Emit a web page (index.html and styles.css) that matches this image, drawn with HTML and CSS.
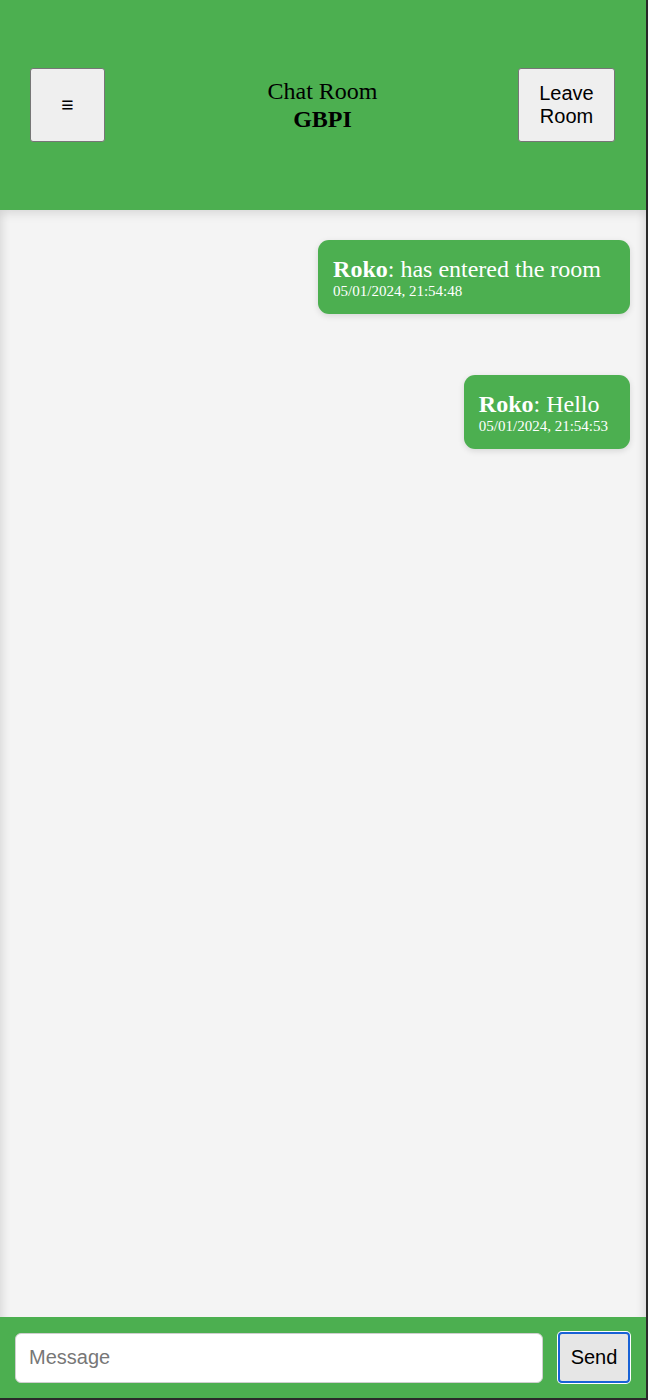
FILE: index.html
```html
<!DOCTYPE html>
<html>
<head>
<meta charset="utf-8">
<link rel="stylesheet" href="styles.css">
</head>
<body>
<div class="app">
  <header class="header">
    <button class="btn menu-btn">&#8801;</button>
    <div class="title">
      <div class="title-main">Chat Room</div>
      <div class="title-room">GBPI</div>
    </div>
    <button class="btn leave-btn">Leave<br>Room</button>
  </header>
  <main class="chat">
    <div class="bubble">
      <div class="msg"><b>Roko</b>: has entered the room</div>
      <div class="time">05/01/2024, 21:54:48</div>
    </div>
    <div class="bubble">
      <div class="msg"><b>Roko</b>: Hello</div>
      <div class="time">05/01/2024, 21:54:53</div>
    </div>
  </main>
  <footer class="footer">
    <input class="input" type="text" placeholder="Message">
    <button class="send">Send</button>
  </footer>
</div>
</body>
</html>
```
FILE: styles.css
```css
html, body {
  margin: 0;
  padding: 0;
  background: #fff;
}
.app {
  width: 646px;
  height: 1398px;
  border-right: 2px solid #2a2a2a;
  border-bottom: 2px solid #2a2a2a;
  display: flex;
  flex-direction: column;
  font-family: "Liberation Serif", serif;
  background: #f4f4f4;
}
.header {
  height: 210px;
  flex: none;
  background: #4caf50;
  display: grid;
  grid-template-columns: 1fr auto 1fr;
  align-items: center;
  padding: 0 31px 0 30px;
  box-sizing: border-box;
  box-shadow: 0 3px 10px rgba(0,0,0,0.12);
  position: relative;
  z-index: 1;
}
.btn {
  background: #efefef;
  border: 1px solid #767676;
  border-radius: 3px;
  font-family: "Liberation Sans", sans-serif;
  color: #000;
  height: 74px;
  padding: 0;
}
.menu-btn {
  width: 75px;
  font-size: 21px;
  font-weight: bold;
  justify-self: start;
}
.leave-btn {
  width: 97px;
  font-size: 20px;
  line-height: 23px;
  justify-self: end;
}
.title {
  text-align: center;
  font-size: 24px;
  line-height: 28px;
  color: #000;
}
.title-room {
  font-weight: bold;
}
.chat {
  flex: 1;
  display: flex;
  flex-direction: column;
  align-items: flex-end;
  gap: 61px;
  padding: 30px 16px 0 0;
  box-shadow: inset 10px 0 10px -8px rgba(0,0,0,0.12), inset -10px 0 10px -8px rgba(0,0,0,0.12);
}
.bubble {
  background: #4caf50;
  color: #fff;
  border-radius: 11px;
  padding: 16px 22px 14px 15px;
  box-shadow: 0 2px 6px rgba(0,0,0,0.12);
}
.msg {
  font-size: 24px;
  line-height: 27px;
  padding-right: 7px;
}
.time {
  font-size: 15px;
  line-height: 17px;
}
.footer {
  height: 81px;
  flex: none;
  background: #4caf50;
  display: flex;
  align-items: center;
  gap: 15px;
  padding: 0 16px 0 15px;
  box-sizing: border-box;
}
.input {
  flex: 1;
  height: 50px;
  box-sizing: border-box;
  border: 1px solid #cfcfcf;
  border-radius: 6px;
  background: #fff;
  font-family: "Liberation Sans", sans-serif;
  font-size: 20px;
  padding: 0 13px;
  outline: none;
}
.input::placeholder {
  color: #777;
}
.send {
  width: 72px;
  height: 51px;
  box-sizing: border-box;
  background: #e6e6e6;
  border: 2px solid #1862d6;
  border-radius: 4px;
  box-shadow: 0 0 0 1px #fff;
  font-family: "Liberation Sans", sans-serif;
  font-size: 20px;
  color: #000;
  padding: 0;
}
```
